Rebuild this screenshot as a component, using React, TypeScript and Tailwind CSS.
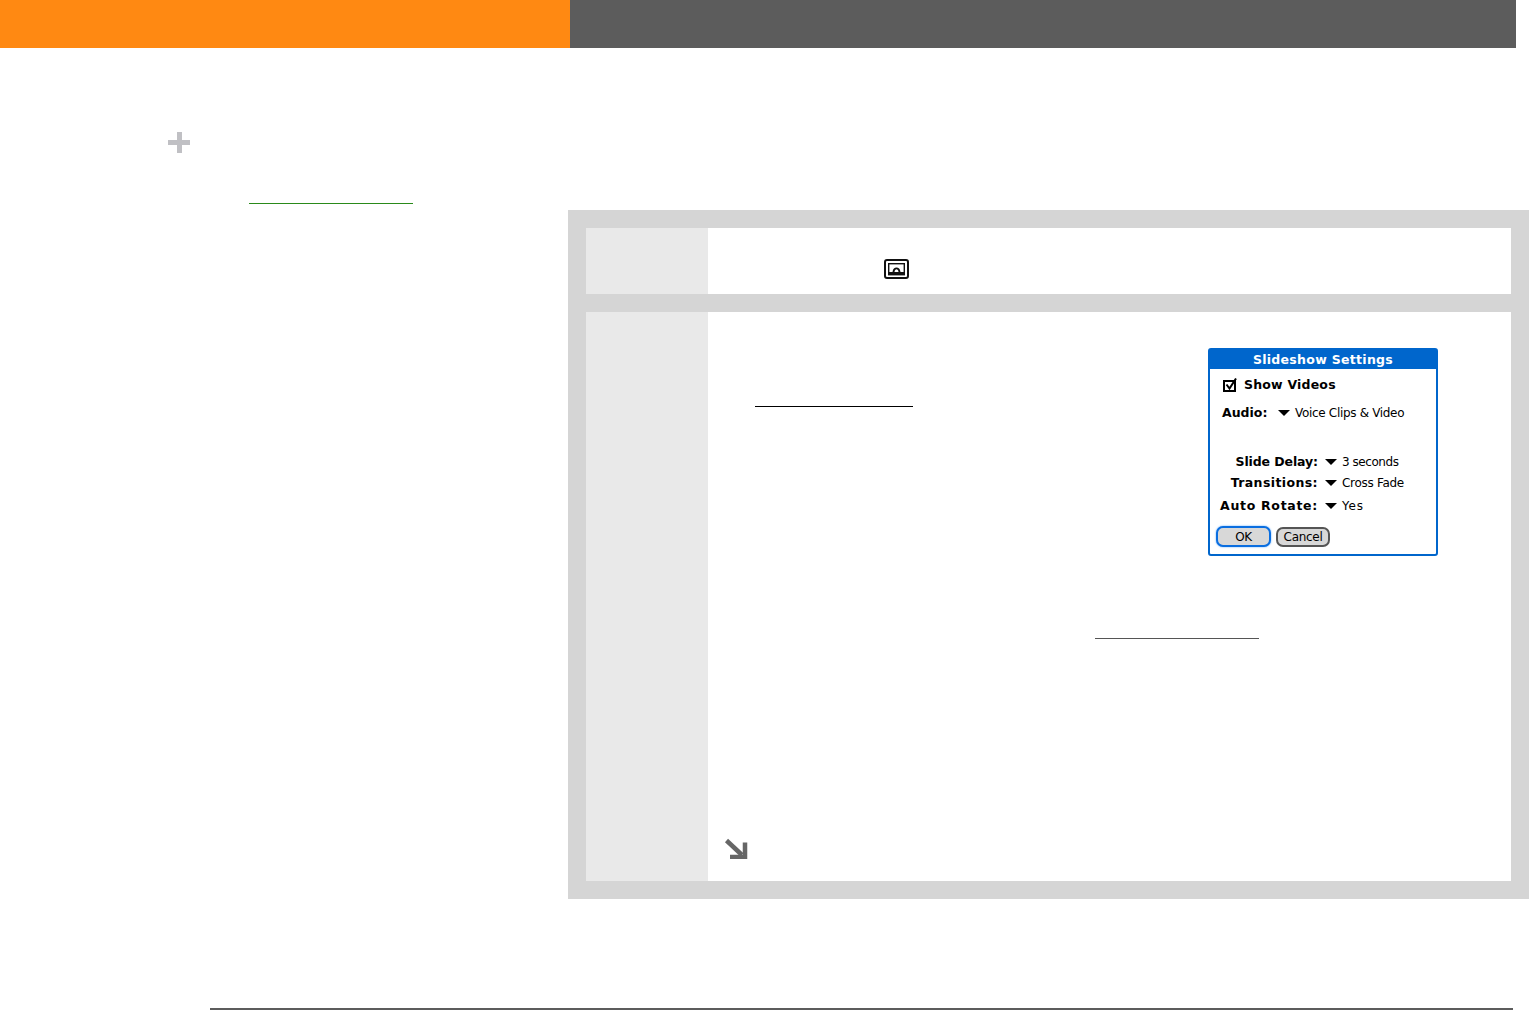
const dialogFont = "font-['DejaVu_Sans',sans-serif]";

function Triangle() {
  return (
    <svg width="12" height="6" viewBox="0 0 12 6" className="shrink-0">
      <path d="M0 0H12L6 6Z" fill="#000" />
    </svg>
  );
}

interface SettingRowProps {
  label: string;
  value: string;
  className: string;
  labelClass: string;
  valueClass: string;
}

function SettingRow({ label, value, className, labelClass, valueClass }: SettingRowProps) {
  return (
    <div className={`flex items-center h-4 ${className}`}>
      <span className={`w-[108px] text-right font-bold text-[12.5px] whitespace-nowrap ${labelClass}`}>{label}</span>
      <span className="ml-[7px]"><Triangle /></span>
      <span className={`ml-[5px] text-[12px] whitespace-nowrap ${valueClass}`}>{value}</span>
    </div>
  );
}

function SlideshowDialog() {
  return (
    <div className={`w-[230px] h-[208px] border-2 border-[#0066cc] rounded-[3px] bg-white text-black flex flex-col ${dialogFont}`}>
      <div className="h-[20px] -mt-[1px] bg-[#0066cc] text-white text-center font-bold text-[12.5px] tracking-[0.3px] leading-[22px]">
        Slideshow Settings
      </div>
      <div className="flex items-center h-4 ml-[13px] mt-[8px]">
        <svg width="15" height="15" viewBox="0 0 15 15" className="shrink-0">
          <rect x="1" y="3" width="11" height="10" fill="none" stroke="#000" strokeWidth="2" />
          <path d="M3.5 6.5L6.5 10.5L13 0.5" fill="none" stroke="#000" strokeWidth="2" />
        </svg>
        <span className="ml-[6px] font-bold text-[12.5px] tracking-[0.2px]">Show Videos</span>
      </div>
      <div className="flex items-center h-4 ml-[12px] mt-[12px]">
        <span className="w-[56px] font-bold text-[12.5px]">Audio:</span>
        <Triangle />
        <span className="ml-[5px] text-[12px] tracking-[-0.32px] whitespace-nowrap">Voice Clips &amp; Video</span>
      </div>
      <SettingRow label="Slide Delay:" value="3 seconds" className="mt-[33px]" labelClass="tracking-[-0.1px]" valueClass="tracking-[-0.45px]" />
      <SettingRow label="Transitions:" value="Cross Fade" className="mt-[5px]" labelClass="tracking-[0.4px]" valueClass="tracking-[-0.3px]" />
      <SettingRow label="Auto Rotate:" value="Yes" className="mt-[7px]" labelClass="tracking-[0.7px]" valueClass="tracking-[0.8px]" />
      <div className="flex items-center ml-[6px] mt-[12px] gap-[5px] text-[12px] tracking-[-0.3px]">
        <button className="w-[55px] h-[21px] rounded-[7px] border-2 border-[#0a6ee0] bg-[#d8d8d8] shadow-[0_0_2px_#5aa8ff] leading-none">OK</button>
        <button className="w-[54px] h-[20px] rounded-[7px] border-2 border-[#555] bg-[#d8d8d8] leading-none">Cancel</button>
      </div>
    </div>
  );
}

export default function App() {
  return (
    <div className="w-[1529px] h-[1010px] bg-white overflow-hidden flex flex-col">
      <header className="h-12 flex shrink-0">
        <div className="w-[570px] bg-[#ff8912]"></div>
        <div className="w-[946px] bg-[#5c5c5c]"></div>
      </header>

      <div className="flex">
        <aside className="w-[568px] shrink-0 pt-[84px] pl-[168px]">
          <svg width="22" height="21" viewBox="0 0 22 21" className="block">
            <path d="M9 0H14V8H22V13H14V21H9V13H0V8H9Z" fill="#c0c0c4" />
          </svg>
          <div className="mt-[50px] ml-[81px] w-[164px] h-px bg-[#2a8a1a]"></div>
        </aside>

        <main className="pt-[162px]">
          <div className="w-[961px] bg-[#d5d5d5] p-[18px] flex flex-col gap-[18px]">
            {/* step 1 */}
            <div className="h-[66px] flex">
              <div className="w-[122px] bg-[#e9e9e9]"></div>
              <div className="flex-1 bg-white pl-[176px] pt-[31px]">
                <svg width="25" height="20" viewBox="0 0 25 20" className="block">
                  <rect x="1" y="1" width="23" height="18" rx="2" fill="#fff" stroke="#111" strokeWidth="2" />
                  <rect x="4.7" y="4.7" width="15.6" height="11" fill="#fff" stroke="#111" strokeWidth="1.4" />
                  <path d="M5 13H8.5C9 9.5 10.5 8.5 12.5 8.5C14.5 8.5 16 9.5 16.5 13H20V15.5H5Z" fill="#111" />
                  <path d="M10.5 13C10.7 11 11.5 10.2 12.5 10.2C13.5 10.2 14.3 11 14.5 13Z" fill="#fff" />
                </svg>
              </div>
            </div>

            {/* step 2 */}
            <div className="h-[569px] flex">
              <div className="w-[122px] bg-[#e9e9e9]"></div>
              <div className="flex-1 bg-white flex flex-col">
                <div className="flex">
                  <div className="w-[500px] pt-[94px] pl-[47px]">
                    <div className="w-[158px] h-px bg-black"></div>
                  </div>
                  <div className="pt-[36px]">
                    <SlideshowDialog />
                  </div>
                </div>
                <div className="mt-[82px] ml-[387px] w-[164px] h-px bg-[#555555]"></div>
                <svg width="24" height="21" viewBox="0 0 24 21" className="block mt-[199px] ml-[16px]">
                  <path d="M2.5 2.5L18 17" fill="none" stroke="#666" strokeWidth="4.5" />
                  <path d="M21 4.5V19H6" fill="none" stroke="#666" strokeWidth="4.5" />
                </svg>
              </div>
            </div>
          </div>
        </main>
      </div>

      <div className="mt-[109px] ml-[210px] w-[1303px] h-[2px] bg-[#5c5c5c]"></div>
    </div>
  );
}
